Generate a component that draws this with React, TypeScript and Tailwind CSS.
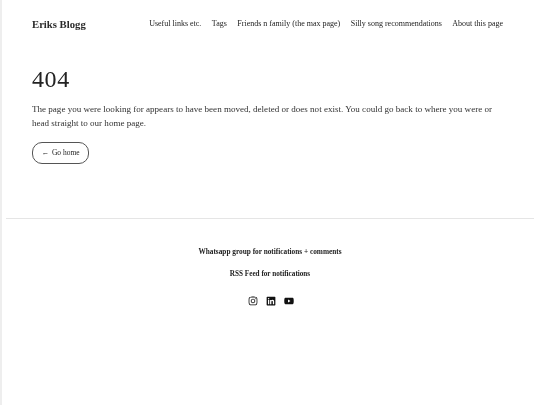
import { FaInstagram, FaLinkedin, FaYoutube } from "react-icons/fa";

const nav = ["Useful links etc.", "Tags", "Friends n family (the max page)", "Silly song recommendations", "About this page"];

export default function App() {
  return (
    <div className="min-h-[405px] w-[540px] bg-white border-l-2 border-[#eeeeee] pl-[4px] pr-[6px] font-['Liberation_Serif',serif] text-[#222] blur-[0.25px]">
      <header className="flex items-center justify-between pl-[26px] pr-[31px] h-[48px]">
        <span className="text-[10.7px] font-bold text-[#2a2a2a]">Eriks Blogg</span>
        <nav className="flex gap-[10.5px] text-[8px] font-medium">
          {nav.map((n) => (
            <span key={n}>{n}</span>
          ))}
        </nav>
      </header>
      <main className="pl-[26px] pr-[31px] pt-[17px] h-[170px]">
        <h1 className="text-[24px] leading-[28px] tracking-wide text-[#222]">404</h1>
        <p className="mt-[9px] text-[9.05px] leading-[14px] text-[#333]">
          The page you were looking for appears to have been moved, deleted or does not exist. You could go back to where you were or head straight to our home page.
        </p>
        <div className="mt-[12px] inline-flex items-center gap-[3px] h-[22px] w-[57px] justify-center rounded-[10px] border border-[#555] text-[7.5px]">
          <span>←</span>
          <span>Go home</span>
        </div>
      </main>
      <footer className="border-t border-[#e5e5e5] flex flex-col items-center pt-[28px]">
        <div className="text-[7.3px] font-bold leading-[10px]">Whatsapp group for notifications + comments</div>
        <div className="mt-[12px] text-[7.2px] font-bold leading-[10px]">RSS Feed for notifications</div>
        <div className="mt-[17px] ml-[1px] flex gap-[8px] text-[#111] text-[10px]">
          <FaInstagram />
          <FaLinkedin />
          <FaYoutube />
        </div>
      </footer>
    </div>
  );
}
